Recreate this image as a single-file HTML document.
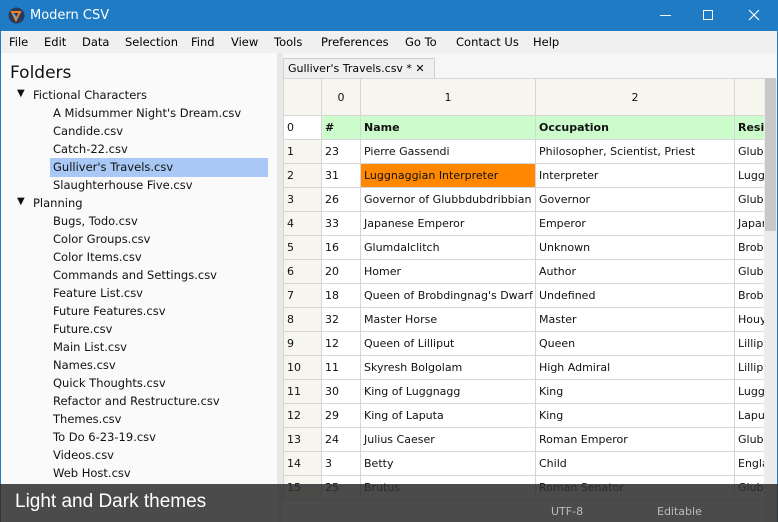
<!DOCTYPE html>
<html><head><meta charset="utf-8"><style>
*{margin:0;padding:0;box-sizing:border-box}
body{width:778px;height:522px;overflow:hidden;position:relative;background:#1e7bc4;font-family:"DejaVu Sans","Liberation Sans",sans-serif}
.title{position:absolute;left:0;top:0;width:778px;height:31px;background:#1e7bc4;color:#fff;font-size:13px}
.title .t{position:absolute;left:30px;top:8px}
.menu{position:absolute;left:1px;top:31px;width:776px;height:22px;background:#f0f0f0;font-size:11.5px;color:#000}
.menu span{position:absolute;top:4px}
.left{position:absolute;left:1px;top:53px;width:276px;height:469px;background:#fafafa;font-size:11.5px;color:#111}
.left div{position:absolute;white-space:nowrap}
.split{position:absolute;left:277px;top:53px;width:6px;height:469px;background:#e8e8e8}
.tabbar{position:absolute;left:283px;top:53px;width:494px;height:25px;background:#f6f6f6}
.tab{position:absolute;left:0;top:5px;width:152px;height:20px;background:#f0f0f0;border:1px solid #d0d0d0;border-bottom:none;font-size:11px;padding:3px 0 0 4px;white-space:nowrap}
.grid{position:absolute;left:283px;top:78px;width:481px;height:444px;overflow:hidden;background:#fff}
table{border-collapse:collapse;table-layout:fixed;width:511px;font-family:"DejaVu Sans",sans-serif;font-size:11px;color:#111}
td{border:1px solid #d6d6d6;height:24px;padding:0 0 0 3px;white-space:nowrap;overflow:hidden}
tr.h td{height:37px;background:#f7f6ee;text-align:center;padding:0}
td.rh{background:#f7f6ee}
tr.g td{background:#ccfccc;font-weight:bold}
tr.g td.rh{background:#fff;font-weight:normal}
.sb{position:absolute;left:764px;top:78px;width:13px;height:444px;background:#ececec}
.sbt{position:absolute;left:765px;top:78px;width:11px;height:153px;background:#c8c8c8}
.ov{position:absolute;left:0;top:484px;width:778px;height:38px;background:rgba(45,45,45,.86)}
.ov .l{position:absolute;left:15px;top:7px;color:#fff;font-family:"Liberation Sans",sans-serif;font-size:19px}
.st{position:absolute;top:505px;color:#bbb;font-size:11px}
</style></head><body>
<div class="title">
<svg style="position:absolute;left:8px;top:7px" width="17" height="17" viewBox="0 0 17 17"><circle cx="8.5" cy="8.5" r="8" fill="#2a3a5a"/><path d="M4 5 L12 5 L8 13 Z" fill="none" stroke="#f08020" stroke-width="2"/><path d="M5 6 L9 12" stroke="#40b0e0" stroke-width="1.5"/></svg>
<span class="t">Modern CSV</span>
<svg style="position:absolute;left:655px;top:9px" width="110" height="12"><path d="M5 6.5H16" stroke="#fff"/><rect x="48.5" y="1.5" width="9" height="9" fill="none" stroke="#fff"/><path d="M94 1L104 11M104 1L94 11" stroke="#fff" stroke-width="1.2"/></svg>
</div>
<div class="menu">
<span style="left:8px">File</span><span style="left:43px">Edit</span><span style="left:81px">Data</span><span style="left:124px">Selection</span><span style="left:190px">Find</span><span style="left:230px">View</span><span style="left:273px">Tools</span><span style="left:320px">Preferences</span><span style="left:404px">Go To</span><span style="left:455px">Contact Us</span><span style="left:532px">Help</span>
</div>
<div class="left">
<div style="left:9px;top:10px;font-size:17px">Folders</div>
<div style="left:16px;top:35px;font-size:10px">▼</div><div style="left:32px;top:35px">Fictional Characters</div>
<div style="left:52px;top:53px">A Midsummer Night's Dream.csv</div>
<div style="left:52px;top:71px">Candide.csv</div>
<div style="left:52px;top:89px">Catch-22.csv</div>
<div style="left:49px;top:105px;width:218px;height:19px;background:#a9c8f6"></div>
<div style="left:52px;top:107px">Gulliver's Travels.csv</div>
<div style="left:52px;top:125px">Slaughterhouse Five.csv</div>
<div style="left:16px;top:143px;font-size:10px">▼</div><div style="left:32px;top:143px">Planning</div>
<div style="left:52px;top:161px">Bugs, Todo.csv</div>
<div style="left:52px;top:179px">Color Groups.csv</div>
<div style="left:52px;top:197px">Color Items.csv</div>
<div style="left:52px;top:215px">Commands and Settings.csv</div>
<div style="left:52px;top:233px">Feature List.csv</div>
<div style="left:52px;top:251px">Future Features.csv</div>
<div style="left:52px;top:269px">Future.csv</div>
<div style="left:52px;top:287px">Main List.csv</div>
<div style="left:52px;top:305px">Names.csv</div>
<div style="left:52px;top:323px">Quick Thoughts.csv</div>
<div style="left:52px;top:341px">Refactor and Restructure.csv</div>
<div style="left:52px;top:359px">Themes.csv</div>
<div style="left:52px;top:377px">To Do 6-23-19.csv</div>
<div style="left:52px;top:395px">Videos.csv</div>
<div style="left:52px;top:413px">Web Host.csv</div>
</div>
<div class="split"></div>
<div class="tabbar"><div class="tab">Gulliver's Travels.csv * ✕</div></div>
<div class="grid"><table>
<colgroup><col style="width:38px"><col style="width:39px"><col style="width:175px"><col style="width:199px"><col style="width:60px"></colgroup>
<tr class="h"><td></td><td>0</td><td>1</td><td>2</td><td></td></tr>
<tr class="g"><td class="rh">0</td><td>#</td><td>Name</td><td>Occupation</td><td>Resi</td></tr>
<tr><td class="rh">1</td><td>23</td><td>Pierre Gassendi</td><td>Philosopher, Scientist, Priest</td><td>Glubl</td></tr>
<tr><td class="rh">2</td><td>31</td><td style="background:#ff8800">Luggnaggian Interpreter</td><td>Interpreter</td><td>Lugg</td></tr>
<tr><td class="rh">3</td><td>26</td><td>Governor of Glubbdubdribbian</td><td>Governor</td><td>Glubl</td></tr>
<tr><td class="rh">4</td><td>33</td><td>Japanese Emperor</td><td>Emperor</td><td>Japan</td></tr>
<tr><td class="rh">5</td><td>16</td><td>Glumdalclitch</td><td>Unknown</td><td>Brobo</td></tr>
<tr><td class="rh">6</td><td>20</td><td>Homer</td><td>Author</td><td>Glubl</td></tr>
<tr><td class="rh">7</td><td>18</td><td>Queen of Brobdingnag's Dwarf</td><td>Undefined</td><td>Brobo</td></tr>
<tr><td class="rh">8</td><td>32</td><td>Master Horse</td><td>Master</td><td>Houy</td></tr>
<tr><td class="rh">9</td><td>12</td><td>Queen of Lilliput</td><td>Queen</td><td>Lillipu</td></tr>
<tr><td class="rh">10</td><td>11</td><td>Skyresh Bolgolam</td><td>High Admiral</td><td>Lillipu</td></tr>
<tr><td class="rh">11</td><td>30</td><td>King of Luggnagg</td><td>King</td><td>Lugg</td></tr>
<tr><td class="rh">12</td><td>29</td><td>King of Laputa</td><td>King</td><td>Lapu</td></tr>
<tr><td class="rh">13</td><td>24</td><td>Julius Caeser</td><td>Roman Emperor</td><td>Glubl</td></tr>
<tr><td class="rh">14</td><td>3</td><td>Betty</td><td>Child</td><td>Engla</td></tr>
<tr><td class="rh">15</td><td>25</td><td>Brutus</td><td>Roman Senator</td><td>Glubl</td></tr>
</table></div>
<div class="sb"></div><div class="sbt"></div>
<div class="ov"><span class="l">Light and Dark themes</span></div>
<div class="st" style="left:551px">UTF-8</div>
<div class="st" style="left:657px">Editable</div>
</body></html>
